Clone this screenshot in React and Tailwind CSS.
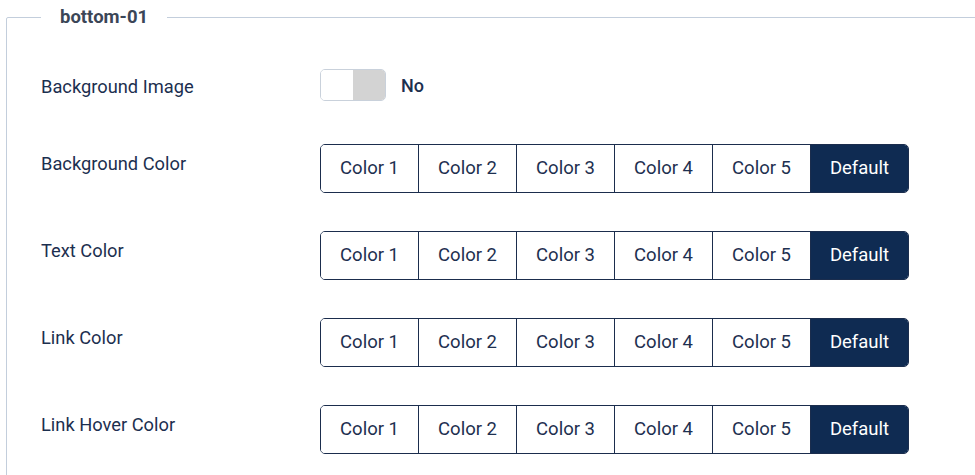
import React from "react";

const rows = ["Background Color", "Text Color", "Link Color", "Link Hover Color"];
const options = ["Color 1", "Color 2", "Color 3", "Color 4", "Color 5", "Default"];

function ColorGroup() {
  return (
    <div className="flex h-[49px] w-[589px] rounded-[5px] border-[1.5px] border-[#1b2d4d] overflow-hidden">
      {options.map((o, i) => (
        <div
          key={o}
          className={
            o === "Default"
              ? "flex-1 flex items-center justify-center bg-[#0f2b52] text-white"
              : "flex-1 flex items-center justify-center border-r border-[#1b2d4d] bg-white text-[#1e3050]"
          }
        >
          {o}
        </div>
      ))}
    </div>
  );
}

export default function App() {
  return (
    <div className="bg-white w-[975px] h-[475px] overflow-hidden pt-[5px] pl-[6px] font-['Roboto',sans-serif]">
      <fieldset className="border border-[#c3cedc] rounded-tl-[2px] pl-[34px] h-[600px] w-[1000px]">
        <legend className="px-[19px] text-[18.5px] leading-[24px] font-bold text-[#3b4657]">
          bottom-01
        </legend>

        {/* background image */}
        <div className="flex mt-[40px] h-[32px]">
          <div className="w-[279px] pt-[7px] text-[18.3px] leading-[22px] text-[#1c2f4f]">
            Background Image
          </div>
          <div className="flex items-center">
            <div className="flex h-[32px] w-[66px] rounded-[5px] border border-[#c9d1db] overflow-hidden">
              <div className="flex-1 bg-white" />
              <div className="flex-1 bg-[#d3d3d3]" />
            </div>
            <span className="ml-[15px] text-[18px] font-medium text-[#1c2f4f]">No</span>
          </div>
        </div>

        <div className="flex flex-col gap-[38px] mt-[43px] text-[18.5px]">
          {rows.map((r) => (
            <div key={r} className="flex">
              <div className="w-[279px] pt-[9px] text-[18.3px] leading-[22px] text-[#1c2f4f]">
                {r}
              </div>
              <ColorGroup />
            </div>
          ))}
        </div>
      </fieldset>
    </div>
  );
}
